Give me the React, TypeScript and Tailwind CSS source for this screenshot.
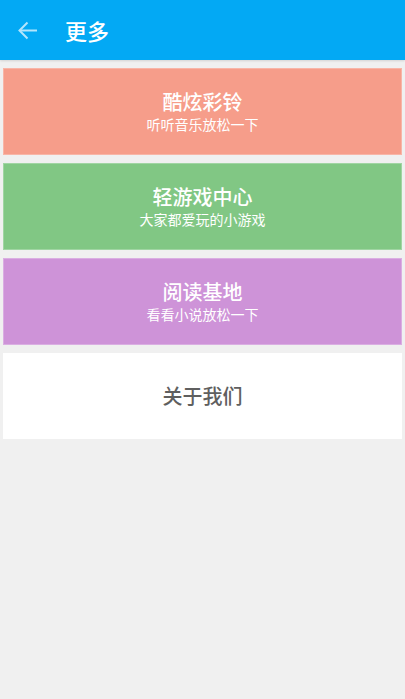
import React from 'react';

const items = [
  { title: '酷炫彩铃', sub: '听听音乐放松一下', bg: 'bg-[#f69d8a]' },
  { title: '轻游戏中心', sub: '大家都爱玩的小游戏', bg: 'bg-[#81c784]' },
  { title: '阅读基地', sub: '看看小说放松一下', bg: 'bg-[#ce93d8]' },
];

const App = () => {
  return (
    <div
      className="min-h-[699px] w-full bg-[#f0f0f0]"
      style={{ fontFamily: '"Noto Sans CJK SC", "Noto Sans", sans-serif' }}
    >
      <div className="flex h-[60px] items-center bg-[#03a9f4] pl-[18px] shadow-[0_1px_2px_rgba(0,0,0,0.12)]">
        <svg width="20" height="19" viewBox="0 0 20 19" fill="none" className="text-[#b3e5fc]">
          <path d="M19 9.5H2" stroke="currentColor" strokeWidth="2" />
          <path d="M9.5 1.5 1.5 9.5l8 8" stroke="currentColor" strokeWidth="2" />
        </svg>
        <h1 className="ml-[27px] text-[22px] font-medium leading-none text-white">更多</h1>
      </div>

      <div className="flex flex-col gap-2 px-[3px] pt-2">
        {items.map((it) => (
          <div
            key={it.title}
            className={`flex h-[87px] flex-col items-center justify-center border border-white/25 ${it.bg} text-white`}
          >
            <div className="text-[20px] font-medium leading-[26px]">{it.title}</div>
            <div className="text-[14px] leading-[19px]">{it.sub}</div>
          </div>
        ))}
        <div className="flex h-[86px] items-center justify-center bg-white">
          <div className="text-[20px] font-medium text-[#5f5f5f]">关于我们</div>
        </div>
      </div>
    </div>
  );
};

export default App;
